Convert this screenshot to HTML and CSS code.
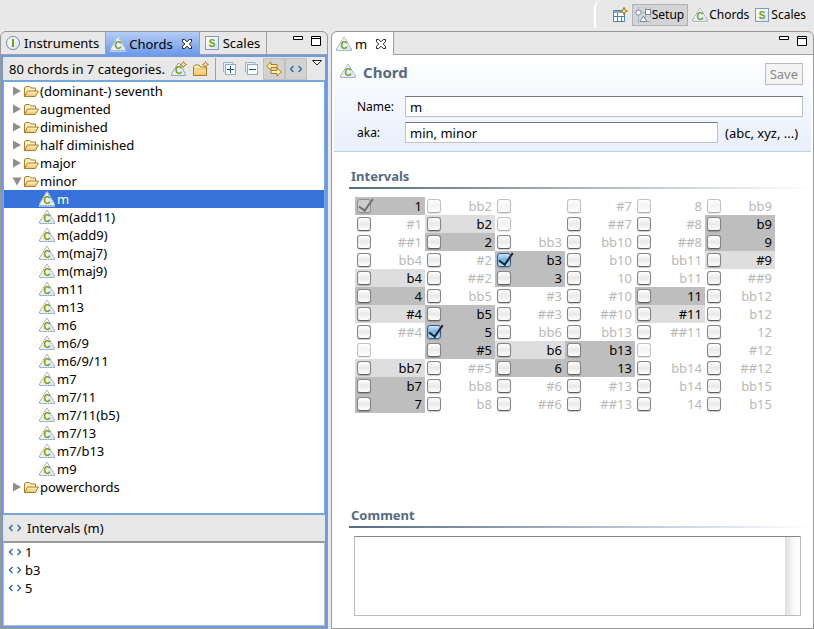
FILE: index.html
```
<!DOCTYPE html>
<html lang="en">
<head>
<meta charset="utf-8">
<title>Chord setup</title>
<link rel="stylesheet" href="styles.css">
</head>
<body>
<svg class="defs" aria-hidden="true">
  <defs>
    <linearGradient id="gold" x1="0" y1="0" x2="0" y2="1"><stop offset="0" stop-color="#fff6d2"/><stop offset="1" stop-color="#f2c25c"/></linearGradient>
    <linearGradient id="box" x1="0" y1="0" x2="1" y2="1"><stop offset="0" stop-color="#fff"/><stop offset="1" stop-color="#d4e6f5"/></linearGradient>
  </defs>
</svg>
<svg class="symbols" aria-hidden="true">
  <symbol id="chord" viewBox="0 0 16 16">
    <path d="M8 1.5 15.5 14.5H.5Z" fill="#fff" stroke="#fff" stroke-width="2" stroke-linejoin="round"/>
    <path d="M7.6 1.5h.8L15.5 13v1.5H.5V13Z" fill="url(#box)" stroke="#8da3c4" stroke-dasharray="2 .6"/>
    <text x="8.2" y="13" class="glyph">C</text>
  </symbol>
  <symbol id="scale" viewBox="0 0 16 16">
    <rect x="1.5" y="1.5" width="13" height="13" fill="url(#box)" stroke="#7f9cc4"/>
    <text x="8" y="12" class="glyph">S</text>
  </symbol>
  <symbol id="instrument" viewBox="0 0 16 16">
    <circle cx="8" cy="8" r="6.5" fill="url(#box)" stroke="#7088b4"/>
    <path d="M8 4v8" stroke="#7e9d00" stroke-width="2"/>
  </symbol>
  <symbol id="folder" viewBox="0 0 16 16">
    <path d="M1.5 13.500V4.500L3 3.500h3.500L8 5h4.500v3" fill="#fff1bd" stroke="#b07a28"/>
    <path d="M1.500 13.500 4.500 8h11l-3.200 5.500Z" fill="url(#gold)" stroke="#b07a28" stroke-linejoin="round"/>
  </symbol>
  <symbol id="spark" viewBox="0 0 7 7"><path d="M3.500.5 4.500 2.500 6.500 3.500 4.500 4.500 3.500 6.500 2.500 4.500.5 3.500 2.500 2.500Z" fill="#ffe9a0" stroke="#a87414" stroke-width=".9"/></symbol>
  <symbol id="new-chord" viewBox="0 0 16 16">
    <path d="M7 2.500h1.500L14.500 13v1.500H.5V13Z" fill="url(#box)" stroke="#8da3c4"/>
    <text x="7.500" y="13" class="glyph">C</text>
    <use href="#spark" x="9" y="0" width="7" height="7"/>
  </symbol>
  <symbol id="new-folder" viewBox="0 0 16 16">
    <path d="M.5 14.500V5.500L2 4h4l1.500 2h6v8.500Z" fill="url(#gold)" stroke="#b07a28"/>
    <path d="M1 8h12" stroke="#e8b860"/>
    <use href="#spark" x="9" y="0" width="7" height="7"/>
  </symbol>
  <symbol id="expand" viewBox="0 0 16 16">
    <path d="M3.500 11H1.500V1.500H11v2" fill="#e2eef8" stroke="#9ab4d0"/>
    <rect x="3.500" y="3.500" width="10" height="10" fill="#fff" stroke="#8eaac8"/>
    <path d="M5 8.500h7M8.500 5v7" stroke="#15528f"/>
  </symbol>
  <symbol id="collapse" viewBox="0 0 16 16">
    <path d="M3.500 11H1.500V1.500H11v2" fill="#e2eef8" stroke="#9ab4d0"/>
    <rect x="3.500" y="3.500" width="10" height="10" fill="#fff" stroke="#8eaac8"/>
    <path d="M5 8.500h7" stroke="#15528f"/>
  </symbol>
  <symbol id="link" viewBox="0 0 16 16">
    <path d="M.7 5 5 .8v2.700h6v3H5v2.700Z" fill="#fff0b4" stroke="#b9790c"/>
    <path d="M15.300 11 11 6.800v2.700H5v3H11v2.700Z" fill="#fff0b4" stroke="#b9790c"/>
  </symbol>
  <symbol id="angles" viewBox="0 0 16 16"><path d="M5.500 5 2.500 8l3 3M10.500 5l3 3-3 3" fill="none" stroke="#2d6a9f" stroke-width="1.400"/></symbol>
  <symbol id="close" viewBox="0 0 12 12"><path d="M1.500 1.500h2.200L6 3.800l2.300-2.300h2.200v2.200L8.200 6l2.300 2.300v2.200H8.300L6 8.200l-2.300 2.300H1.500V8.300L3.800 6 1.500 3.700Z" fill="#fff" stroke="#222"/></symbol>
  <symbol id="minimize" viewBox="0 0 12 12"><path d="M1.500 1.500h9v3h-9Z" fill="#fff" stroke="#000"/></symbol>
  <symbol id="maximize" viewBox="0 0 12 12"><path d="M1.500 1.500h9v9h-9ZM1 3.500h10" fill="#fff" stroke="#000"/></symbol>
  <symbol id="menu" viewBox="0 0 12 12"><path d="M1.500 3.500h9L6 8Z" fill="#fff" stroke="#222"/></symbol>
  <symbol id="closed" viewBox="0 0 10 12"><path d="M1 1.500v9L9 6Z" fill="#8e8e8e"/></symbol>
  <symbol id="opened" viewBox="0 0 10 12"><path d="M.5 2.500h9L5 10.500Z" fill="#8e8e8e"/></symbol>
  <symbol id="perspective" viewBox="0 0 16 16">
    <path d="M1.500 3.500h11v11h-11Z" fill="#fff" stroke="#4f81ad"/>
    <path d="M2 5h9" stroke="#7fb0d8" stroke-width="2"/>
    <path d="M5.500 6v8M2 9.500h10M9.500 10v4" stroke="#4f81ad"/>
    <use href="#spark" x="8" y="0" width="8" height="8"/>
  </symbol>
  <symbol id="setup" viewBox="0 0 16 16">
    <path d="M3.500 0v16M0 5.500h16M10.500 0v11M15.500 0v11M5 14.500h11M10 2.500h6" stroke="#a3b5cf" fill="none"/>
    <circle cx="3.500" cy="5.500" r="2.600" fill="#fff" stroke="#7088ac"/>
    <rect x="10.500" y="2.500" width="5" height="5" fill="#fff" stroke="#7088ac"/>
    <path d="M8.500 9 12 14.500H5Z" fill="#fff" stroke="#7088ac"/>
  </symbol>
</svg>

<header class="topbar">
  <nav class="perspectives" aria-label="Perspectives">
    <button class="persp" aria-label="Open perspective"><svg class="icon"><use href="#perspective"/></svg></button>
    <button class="persp active"><svg class="icon"><use href="#setup"/></svg>Setup</button>
    <button class="persp"><svg class="icon"><use href="#chord"/></svg>Chords</button>
    <button class="persp"><svg class="icon"><use href="#scale"/></svg>Scales</button>
  </nav>
</header>

<main class="workbench">
  <section class="pane">
    <div class="tabs">
      <button class="tab"><svg class="icon"><use href="#instrument"/></svg>Instruments</button>
      <button class="tab current"><svg class="icon"><use href="#chord"/></svg>Chords<svg class="small close"><use href="#close"/></svg></button>
      <button class="tab"><svg class="icon"><use href="#scale"/></svg>Scales</button>
      <div class="window-buttons">
        <button class="plain" aria-label="Minimize"><svg class="small"><use href="#minimize"/></svg></button>
        <button class="plain" aria-label="Maximize"><svg class="small"><use href="#maximize"/></svg></button>
      </div>
    </div>
    <div class="view">
      <div class="toolbar">
        <span class="summary">80 chords in 7 categories.</span>
        <button class="tool" aria-label="New chord"><svg class="icon"><use href="#new-chord"/></svg></button>
        <button class="tool" aria-label="New category"><svg class="icon"><use href="#new-folder"/></svg></button>
        <span class="divider"></span>
        <button class="tool" aria-label="Expand all"><svg class="icon"><use href="#expand"/></svg></button>
        <button class="tool" aria-label="Collapse all"><svg class="icon"><use href="#collapse"/></svg></button>
        <button class="tool pressed" aria-label="Link with editor"><svg class="icon"><use href="#link"/></svg></button>
        <button class="tool pressed" aria-label="Show intervals"><svg class="icon"><use href="#angles"/></svg></button>
        <button class="plain menu" aria-label="View menu"><svg class="small"><use href="#menu"/></svg></button>
      </div>
      <ul class="tree" id="tree"></ul>
      <h2 class="subhead"><svg class="icon"><use href="#angles"/></svg>Intervals (m)</h2>
      <ul class="list">
        <li><svg class="icon"><use href="#angles"/></svg>1</li>
        <li><svg class="icon"><use href="#angles"/></svg>b3</li>
        <li><svg class="icon"><use href="#angles"/></svg>5</li>
      </ul>
    </div>
  </section>

  <section class="pane editor">
    <div class="tabs">
      <button class="tab current"><svg class="icon"><use href="#chord"/></svg>m<svg class="small close"><use href="#close"/></svg></button>
      <div class="window-buttons">
        <button class="plain" aria-label="Minimize"><svg class="small"><use href="#minimize"/></svg></button>
        <button class="plain" aria-label="Maximize"><svg class="small"><use href="#maximize"/></svg></button>
      </div>
    </div>
    <form class="form">
      <div class="head">
        <div class="title-row">
          <svg class="icon"><use href="#chord"/></svg>
          <h1>Chord</h1>
          <button class="save" type="button" disabled>Save</button>
        </div>
        <div class="field">
          <label for="name">Name:</label>
          <input class="text" id="name" type="text" value="m">
        </div>
        <div class="field">
          <label for="aka">aka:</label>
          <input class="text" id="aka" type="text" value="min, minor">
          <span class="hint">(abc, xyz, ...)</span>
        </div>
      </div>
      <h2 class="section">Intervals</h2>
      <div class="intervals" id="intervals"></div>
      <h2 class="section" id="comment-label">Comment</h2>
      <textarea class="comment" aria-labelledby="comment-label"></textarea>
    </form>
  </section>
</main>
<script src="script.js"></script>
</body>
</html>
```
FILE: styles.css
```
* { box-sizing: border-box; }

body {
  margin: 0;
  height: 100vh;
  display: flex;
  flex-direction: column;
  background: #e8e8e8;
  color: #000;
  font: 13px/18px "Noto Sans", "Open Sans", sans-serif;
}

button, input, textarea { font: inherit; color: inherit; }
button { display: flex; align-items: center; margin: 0; padding: 0; border: 0; background: none; }
ul { margin: 0; padding: 0; list-style: none; }
h1, h2 { margin: 0; }

.defs { position: absolute; width: 0; height: 0; }
.symbols { display: none; }
.icon { width: 16px; height: 16px; flex: none; }
.small { width: 12px; height: 12px; flex: none; }
.glyph { font: bold 10px "Liberation Sans", sans-serif; fill: #7e9d00; text-anchor: middle; }

.topbar { display: flex; justify-content: flex-end; flex: none; height: 31px; }
.perspectives {
  display: flex;
  align-items: center;
  gap: 3px;
  height: 28px;
  padding: 2px 7px 0 15px;
  border-left: 2px solid #fff;
  border-radius: 8px 0 0 0;
}
.persp { height: 22px; gap: 1px; border: 1px solid transparent; font-size: 12px; }
.persp.active { padding: 0 3px 0 2px; border-color: #b0b0b0; background: #d4d4d4; }

.workbench {
  flex: 1;
  min-height: 0;
  display: grid;
  grid-template-columns: 328fr 483fr;
  gap: 3px;
}
.pane {
  display: flex;
  flex-direction: column;
  min-width: 0;
  min-height: 0;
  border: 1px solid #999;
  border-radius: 6px 6px 0 0;
}
.tabs { display: flex; flex: none; height: 23px; border-bottom: 1px solid #a0a0a0; }
.tab { gap: 3px; padding: 0 6px 0 4px; border-right: 1px solid #a0a0a0; }
.tab .close { margin-left: 5px; }
.pane .tab.current { background: linear-gradient(#b4ccf6, #6d9aea); margin-bottom: -1px; }
.editor .tab.current { background: #fff; border-radius: 6px 0 0 0; }
.window-buttons { display: flex; align-items: flex-start; gap: 6px; margin-left: auto; padding: 3px 5px 0 0; }

.view {
  flex: 1;
  min-height: 0;
  display: flex;
  flex-direction: column;
  border: 2px solid #6f9ae6;
}
.toolbar { display: flex; align-items: center; flex: none; height: 23px; padding-left: 6px; }
.summary { margin-right: auto; white-space: nowrap; }
.tool { justify-content: center; width: 22px; height: 22px; }
.tool.pressed { background: #d2d2d2; border: 1px solid #c0c0c0; }
.divider { width: 1px; height: 22px; margin: 0 3px; background: #a0a0a0; }
.menu { align-self: flex-start; margin: 0 2px 0 4px; }

.tree { flex: 1; min-height: 0; overflow: hidden; background: #fff; border: solid #74a7dc; border-width: 2px 1px; }
.row { display: flex; align-items: center; gap: 1px; height: 18px; padding-left: 8px; }
.row .arrow { width: 10px; height: 12px; flex: none; }
.branch .row { gap: 2px; padding-left: 35px; }
.row.selected { background: #3672d9; color: #fff; }

.subhead { display: flex; align-items: center; gap: 4px; flex: none; height: 26px; padding-left: 4px; font-size: 13px; font-weight: 400; }
.list { flex: none; height: 85px; background: #fff; border: 1px solid #bbb; border-top: 2px solid #999; }
.list li { display: flex; align-items: center; gap: 2px; height: 18px; padding-left: 3px; }

.form { flex: 1; min-height: 0; display: flex; flex-direction: column; background: #fff; }
.head {
  flex: none;
  display: flex;
  flex-direction: column;
  gap: 5px;
  margin: 0 2px;
  height: 97px;
  padding: 8px 8px 0 6px;
  border-bottom: 1px solid #bccfe8;
  background: linear-gradient(#fff, #e8effc);
}
.title-row { display: flex; align-items: flex-start; gap: 7px; height: 28px; }
h1 { font-size: 15px; line-height: 18px; color: #566a82; }
.save { height: 22px; margin-left: auto; padding: 0 4px; border: 1px solid #bbb; background: #f4f4f4; color: #888; }
.field { display: flex; align-items: center; padding-left: 17px; }
.field label { width: 48px; font-size: 12px; flex: none; }
.text {
  flex: 1;
  min-width: 0;
  height: 21px;
  padding: 0 4px;
  background: #fff;
  border: 1px solid #c0c0c0;
  border-top-color: #777;
  border-radius: 0;
}
.hint { width: 85px; padding-left: 7px; white-space: nowrap; }

.section {
  flex: none;
  margin: 15px 2px 0 17px;
  padding: 0 0 2px 2px;
  font-size: 13px;
  color: #566a82;
  border-bottom: 2px solid;
  border-image: linear-gradient(90deg, #566a82, #b8c4d4 60%, #fff) 1;
}
.intervals {
  flex: none;
  display: grid;
  grid-template-rows: repeat(12, 18px);
  grid-auto-columns: 70px;
  grid-auto-flow: column;
  padding: 8px 0 0 23px;
}
.interval { display: flex; align-items: center; justify-content: space-between; padding: 0 3px 0 2px; color: #b8b8b8; }
.interval.light { background: #dedede; color: #000; }
.interval.dark { background: #bebebe; color: #000; }
.interval input {
  appearance: none;
  width: 14px;
  height: 14px;
  margin: 0;
  border: 1px solid #858585;
  border-bottom-color: #606060;
  border-radius: 3px;
  background: linear-gradient(#fff, #e9e9e9 50%, #fff);
  box-shadow: 0 1px 1px #0003;
}
.interval input:disabled { opacity: .5; }
.interval input:checked { background: linear-gradient(#cfe5fa, #6eb2ec 50%, #b4e4ff); border-color: #31598c; }
.interval input:checked:disabled { background: #ddd; border-color: #666; }
.interval input:checked::after {
  content: "";
  display: block;
  width: 6px;
  height: 13px;
  margin: -4px 0 0 4px;
  border: solid #222;
  border-width: 0 2px 2px 0;
  transform: rotate(35deg);
}
.intervals + .section { margin-top: 93px; }
.comment {
  flex: 1;
  min-height: 40px;
  margin: 8px 12px 12px 22px;
  resize: none;
  border: 1px solid #bbb;
  border-top-color: #888;
  border-radius: 0;
  background: linear-gradient(90deg, #dcdcdc, #fafafa 60%, #fff) right / 15px 100% no-repeat #fff;
}
```
FILE: script.js
```
const categories = [
  ["(dominant-) seventh"], ["augmented"], ["diminished"], ["half diminished"], ["major"],
  ["minor", ["m", "m(add11)", "m(add9)", "m(maj7)", "m(maj9)", "m11", "m13", "m6", "m6/9",
    "m6/9/11", "m7", "m7/11", "m7/11(b5)", "m7/13", "m7/b13", "m9"]],
  ["powerchords"]
];
const icon = (id, cls = "icon") => `<svg class="${cls}"><use href="#${id}"/></svg>`;
document.getElementById("tree").innerHTML = categories.map(([name, chords]) =>
  `<li><div class="row">${icon(chords ? "opened" : "closed", "arrow")}${icon("folder")}${name}</div>` +
  (chords ? `<ul class="branch">${chords.map((c, i) =>
    `<li class="row${i ? "" : " selected"}">${icon("chord")}${c}</li>`).join("")}</ul>` : "") +
  "</li>").join("");

// One line per column. Suffixes: * dark, + light, ! checked, - disabled; "_" has no name.
const columns = [
  "1*!- #1 ##1 bb4 b4+ 4* #4+ ##4 _- bb7+ b7* 7*",
  "bb2- b2+ 2* #2 ##2 bb5 b5* 5*! #5* ##5 bb8 b8",
  "_- _- bb3 b3*! 3* #3 ##3 bb6 b6+ 6* #6 ##6",
  "#7- ##7 bb10 b10 10 #10 ##10 bb13 b13* 13* #13 ##13",
  "8- #8 ##8 bb11 b11 11* #11+ ##11 _- bb14 b14 14",
  "bb9- b9* 9* #9+ ##9 bb12 b12 12 #12 ##12 bb15 b15"
];
document.getElementById("intervals").innerHTML = columns.join(" ").split(" ").map(cell => {
  const [, name, flags] = cell.match(/^([^*+!-]+)(.*)$/);
  const shade = flags.includes("*") ? " dark" : flags.includes("+") ? " light" : "";
  const state = (flags.includes("!") ? " checked" : "") + (flags.includes("-") ? " disabled" : "");
  return `<label class="interval${shade}"><input type="checkbox"${state}>${name === "_" ? "" : name}</label>`;
}).join("");
```
